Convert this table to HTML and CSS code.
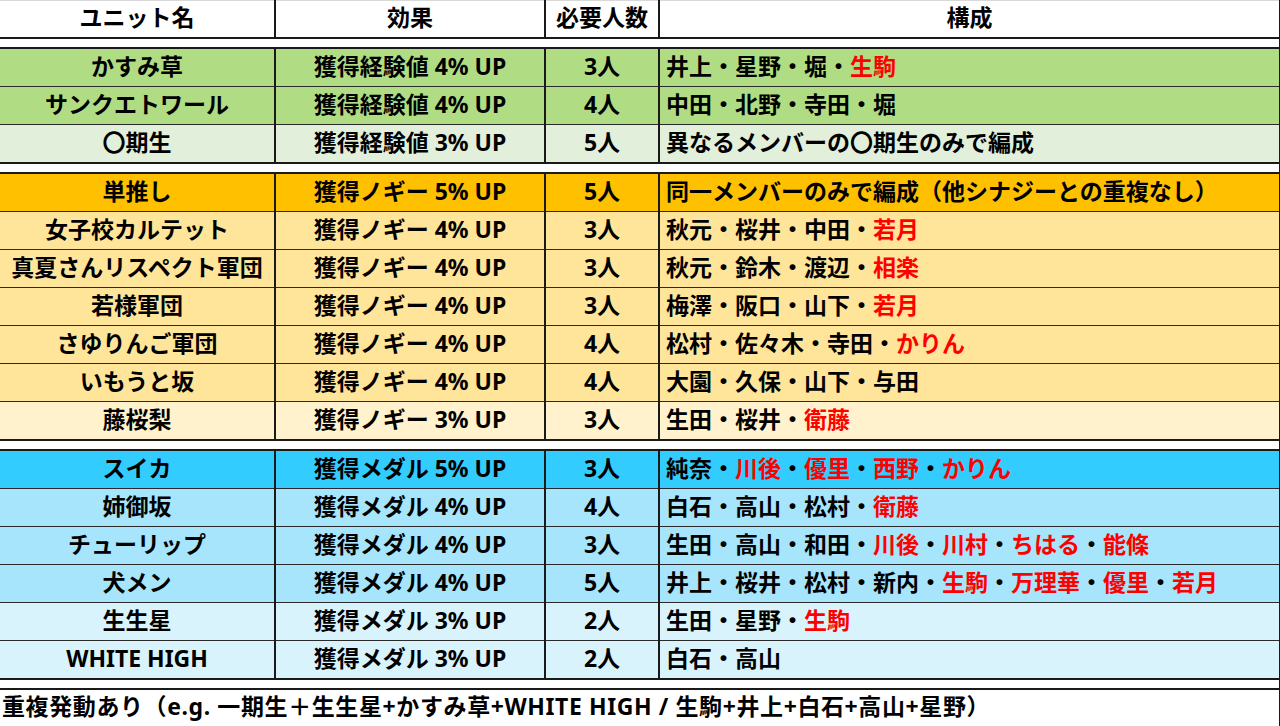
FILE: index.html
```html
<!DOCTYPE html>
<html lang="ja">
<head>
<meta charset="utf-8">
<link rel="stylesheet" href="styles.css">
</head>
<body>
<table class="units">
  <colgroup>
    <col class="c1"><col class="c2"><col class="c3"><col class="c4">
  </colgroup>
  <thead>
    <tr class="head">
      <th>ユニット名</th><th>効果</th><th>必要人数</th><th>構成</th>
    </tr>
  </thead>
  <tbody>
    <tr class="gap"><td colspan="4"></td></tr>
    <tr class="g1 top"><td>かすみ草</td><td>獲得経験値 4% UP</td><td>3人</td><td class="mem">井上・星野・堀・<span class="r">生駒</span></td></tr>
    <tr class="g1"><td>サンクエトワール</td><td>獲得経験値 4% UP</td><td>4人</td><td class="mem">中田・北野・寺田・堀</td></tr>
    <tr class="g2 bottom"><td>〇期生</td><td>獲得経験値 3% UP</td><td>5人</td><td class="mem">異なるメンバーの〇期生のみで編成</td></tr>
    <tr class="gap"><td colspan="4"></td></tr>
    <tr class="o1 top"><td>単推し</td><td>獲得ノギー 5% UP</td><td>5人</td><td class="mem">同一メンバーのみで編成（他シナジーとの重複なし）</td></tr>
    <tr class="o2"><td>女子校カルテット</td><td>獲得ノギー 4% UP</td><td>3人</td><td class="mem">秋元・桜井・中田・<span class="r">若月</span></td></tr>
    <tr class="o2"><td>真夏さんリスペクト軍団</td><td>獲得ノギー 4% UP</td><td>3人</td><td class="mem">秋元・鈴木・渡辺・<span class="r">相楽</span></td></tr>
    <tr class="o2"><td>若様軍団</td><td>獲得ノギー 4% UP</td><td>3人</td><td class="mem">梅澤・阪口・山下・<span class="r">若月</span></td></tr>
    <tr class="o2"><td>さゆりんご軍団</td><td>獲得ノギー 4% UP</td><td>4人</td><td class="mem">松村・佐々木・寺田・<span class="r">かりん</span></td></tr>
    <tr class="o2"><td>いもうと坂</td><td>獲得ノギー 4% UP</td><td>4人</td><td class="mem">大園・久保・山下・与田</td></tr>
    <tr class="o3 bottom"><td>藤桜梨</td><td>獲得ノギー 3% UP</td><td>3人</td><td class="mem">生田・桜井・<span class="r">衛藤</span></td></tr>
    <tr class="gap"><td colspan="4"></td></tr>
    <tr class="b1 top"><td>スイカ</td><td>獲得メダル 5% UP</td><td>3人</td><td class="mem">純奈・<span class="r">川後</span>・<span class="r">優里</span>・<span class="r">西野</span>・<span class="r">かりん</span></td></tr>
    <tr class="b2"><td>姉御坂</td><td>獲得メダル 4% UP</td><td>4人</td><td class="mem">白石・高山・松村・<span class="r">衛藤</span></td></tr>
    <tr class="b2"><td>チューリップ</td><td>獲得メダル 4% UP</td><td>3人</td><td class="mem">生田・高山・和田・<span class="r">川後</span>・<span class="r">川村</span>・<span class="r">ちはる</span>・<span class="r">能條</span></td></tr>
    <tr class="b2"><td>犬メン</td><td>獲得メダル 4% UP</td><td>5人</td><td class="mem">井上・桜井・松村・新内・<span class="r">生駒</span>・<span class="r">万理華</span>・<span class="r">優里</span>・<span class="r">若月</span></td></tr>
    <tr class="b3"><td>生生星</td><td>獲得メダル 3% UP</td><td>2人</td><td class="mem">生田・星野・<span class="r">生駒</span></td></tr>
    <tr class="b3 bottom"><td>WHITE HIGH</td><td>獲得メダル 3% UP</td><td>2人</td><td class="mem">白石・高山</td></tr>
    <tr class="gap"><td colspan="4"></td></tr>
    <tr class="foot"><td colspan="4">重複発動あり（e.g. 一期生＋生生星+かすみ草+WHITE HIGH / 生駒+井上+白石+高山+星野）</td></tr>
  </tbody>
</table>
</body>
</html>
```

FILE: styles.css
```css
html, body {
  margin: 0;
  padding: 0;
  background: #ffffff;
}

body {
  font-family: "Noto Sans", "Noto Sans CJK JP", sans-serif;
  font-weight: bold;
  font-size: 23px;
  color: #000000;
}

.units {
  width: 1280px;
  border-collapse: collapse;
  table-layout: fixed;
}

.c1 { width: 275px; }
.c2 { width: 270px; }
.c3 { width: 114px; }
.c4 { width: 621px; }

.units th,
.units td {
  padding: 0 0 3px 0;
  text-align: center;
  line-height: 1;
  border-left: 2px solid #1a1a1a;
  border-right: 2px solid #1a1a1a;
  border-top: 1px solid #2a2a2a;
  border-bottom: 1px solid #2a2a2a;
  white-space: nowrap;
}

.units th:first-child,
.units td:first-child {
  border-left: none;
}

.head th {
  height: 33px;
  font-weight: bold;
  border-top: 1px solid #d8d8d8;
  border-bottom: 2px solid #1a1a1a;
}

.units tr.g1 td,
.units tr.g2 td,
.units tr.o1 td,
.units tr.o2 td,
.units tr.o3 td,
.units tr.b1 td,
.units tr.b2 td,
.units tr.b3 td {
  height: 34px;
}

.units tr.top td {
  border-top: 2px solid #1a1a1a;
}

.units tr.bottom td {
  border-bottom: 2px solid #1a1a1a;
}

.units .gap td {
  height: 8px;
  padding: 0;
  border-left: none;
  border-right: 2px solid #1a1a1a;
  border-top: 2px solid #1a1a1a;
  border-bottom: 1px solid #9a9a9a;
  background: #ffffff;
}

.units td.mem {
  text-align: left;
  padding-left: 6px;
}

.r { color: #ff0000; }

.g1 td { background: #b0dd83; }
.g2 td { background: #e2efda; }
.o1 td { background: #ffc000; }
.o2 td { background: #ffe599; }
.o3 td { background: #fff2cc; }
.b1 td { background: #33ccff; }
.b2 td { background: #a6e5fb; }
.b3 td { background: #d9f3fc; }

.units .foot td {
  height: 33px;
  text-align: left;
  padding-left: 2px;
  letter-spacing: 0.6px;
  border-top: 2px solid #1a1a1a;
  border-bottom: 2px solid #1a1a1a;
  border-left: none;
  background: #ffffff;
}
```
